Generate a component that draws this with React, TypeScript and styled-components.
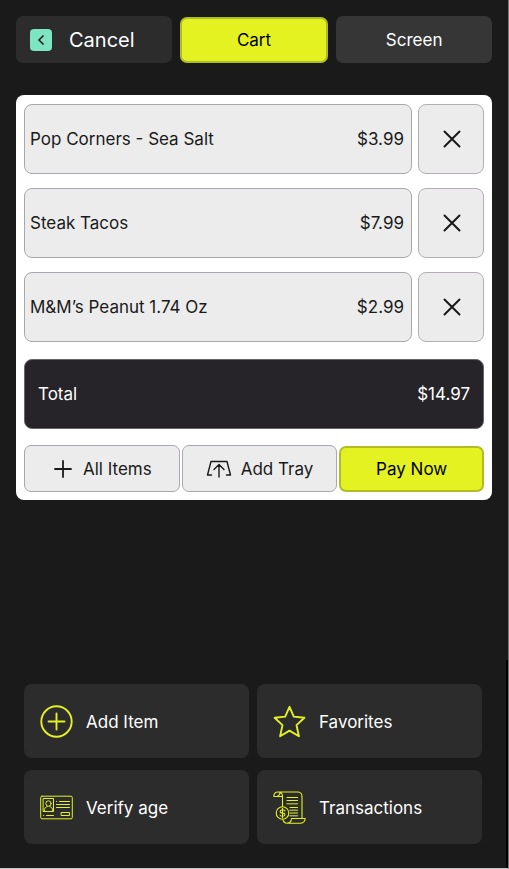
import React from "react";
import styled, { createGlobalStyle, css } from "styled-components";

const GlobalStyle = createGlobalStyle`
  *, *::before, *::after { box-sizing: border-box; }
  body {
    margin: 0;
    background: #1a1a1a;
    font-family: Inter, "Liberation Sans", sans-serif;
  }
  button { font: inherit; cursor: pointer; }
`;

const Page = styled.main`
  position: relative;
  display: flex;
  flex-direction: column;
  min-height: 100vh;
  padding: 16px 16px 24px;
  background: #1a1a1a;
  border-right: 1px solid #777777;
  border-bottom: 1px solid #c4c4c4;
  font-size: 17px;
  line-height: 24px;

  &::after {
    content: "";
    position: absolute;
    right: 0;
    bottom: 0;
    width: 2px;
    height: 24%;
    background: #000000;
  }
`;

const TopBar = styled.nav`
  display: grid;
  grid-template-columns: 156fr 149fr 156fr;
  align-items: center;
  gap: 8px;
  margin-bottom: 32px;
`;

const TopButton = styled.button<{ $active?: boolean; $shade?: string }>`
  display: flex;
  align-items: center;
  justify-content: center;
  height: 47px;
  padding: 1px 14px 0;
  border: 0;
  border-radius: 7px;
  background: ${(p) => p.$shade ?? "#2c2c2c"};
  color: #ffffff;
  ${(p) =>
    p.$active &&
    css`
      height: 46px;
      border: 2px solid #b2bd25;
      background: #e4f222;
      color: #000000;
    `}
`;

const CancelButton = styled(TopButton)`
  justify-content: flex-start;
  gap: 17px;
  font-size: 20px;
`;

const BackBadge = styled.span`
  display: grid;
  place-items: center;
  width: 22px;
  height: 22px;
  border-radius: 4px;
  background: #7de5c2;
`;

const CartCard = styled.section`
  padding: 9px 8px 8px;
  border-radius: 8px;
  background: #ffffff;
  color: #1a1a1a;
`;

const ItemList = styled.ul`
  display: flex;
  flex-direction: column;
  gap: 14px;
  margin: 0 0 17px;
  padding: 0;
  list-style: none;
`;

const ItemRow = styled.li`
  display: grid;
  grid-template-columns: 1fr 66px;
  gap: 6px;
`;

const ItemPanel = styled.div`
  display: flex;
  align-items: center;
  justify-content: space-between;
  height: 70px;
  padding: 0 7px 0 5px;
  border: 1px solid #aaa6ad;
  border-radius: 8px;
  background: #ececec;
`;

const RemoveButton = styled.button`
  display: grid;
  place-items: center;
  padding: 0 0 0 1px;
  border: 1px solid #b5aeb7;
  border-radius: 8px;
  background: #ececec;
  color: #1a1a1a;
`;

const TotalPanel = styled(ItemPanel)`
  margin-bottom: 16px;
  padding: 0 13px;
  border-color: #68656b;
  background: #262428;
  color: #ffffff;
`;

const CartActions = styled.div`
  display: grid;
  grid-template-columns: 156fr 156fr 145fr;
  align-items: center;
  gap: 2px;
`;

const ActionButton = styled.button<{ $primary?: boolean }>`
  display: flex;
  align-items: center;
  justify-content: center;
  gap: 9px;
  height: 47px;
  padding: 1px 0 0;
  border: 1px solid #aaa6ad;
  border-radius: 7px;
  background: #ececec;
  color: #1a1a1a;
  ${(p) =>
    p.$primary &&
    css`
      height: 46px;
      border: 2px solid #b2bd25;
      background: #e4f222;
      color: #000000;
    `}
`;

const TileGrid = styled.section`
  display: grid;
  grid-template-columns: 1fr 1fr;
  gap: 12px 8px;
  margin: auto 10px 0 8px;
  padding-top: 24px;
`;

const Tile = styled.button`
  display: flex;
  align-items: center;
  gap: 13px;
  height: 74px;
  padding: 1px 16px 0;
  border: 0;
  border-radius: 8px;
  background: #2c2c2c;
  color: #ffffff;

  svg { flex: none; }
`;

const accent = "#e4f222";

const ChevronLeft = () => (
  <svg width="14" height="14" viewBox="0 0 14 14" fill="none" stroke="#111" strokeWidth="1.5" aria-hidden="true">
    <path d="M9.5 2.5 5 7l4.5 4.5" />
  </svg>
);

const CrossIcon = () => (
  <svg width="20" height="20" viewBox="0 0 20 20" fill="none" stroke="currentColor" strokeWidth="2" strokeLinecap="round" aria-hidden="true">
    <path d="M2.5 2.5l15 15M17.5 2.5l-15 15" />
  </svg>
);

const PlusIcon = () => (
  <svg width="22" height="22" viewBox="0 0 22 22" fill="none" stroke="currentColor" strokeWidth="1.8" strokeLinecap="round" aria-hidden="true">
    <path d="M11 3v16M3 11h16" />
  </svg>
);

const TrayIcon = () => (
  <svg width="26" height="20" viewBox="0 0 26 20" fill="none" stroke="currentColor" strokeWidth="1.4" strokeLinecap="round" strokeLinejoin="round" aria-hidden="true">
    <path d="M5.5 16H1.5L5 2.5h16L24.5 16h-4M13 18V6M8 10.5l5-5 5 5" />
  </svg>
);

const AddCircleIcon = () => (
  <svg width="33" height="33" viewBox="0 0 33 33" fill="none" stroke={accent} strokeWidth="1.9" strokeLinecap="round" aria-hidden="true">
    <circle cx="16.5" cy="16.5" r="15.2" />
    <path d="M16.5 8.5v16M8.5 16.5h16" />
  </svg>
);

const StarIcon = () => (
  <svg width="33" height="33" viewBox="0 0 33 33" fill="none" stroke={accent} strokeWidth="1.9" strokeLinejoin="round" aria-hidden="true">
    <path d="M16.5 1.8 20.8 11.6 31.4 12.8 23.5 20.1 25.9 31.2 16.5 25.6 7.1 31.2 9.5 20.1 1.6 12.8 12.2 11.6Z" />
  </svg>
);

const IdCardIcon = () => (
  <svg width="33" height="33" viewBox="0 0 33 33" fill="none" stroke={accent} strokeWidth="1" strokeLinecap="round" strokeLinejoin="round" aria-hidden="true">
    <rect x=".7" y="5.2" width="31.6" height="22.6" rx="1.3" />
    <rect x="3.5" y="7.5" width="10" height="13" />
    <circle cx="8.5" cy="12.5" r="2.7" />
    <path d="M4.4 20v-1.7q.5-2.3 2.8-2.8M12.6 20v-1.7q-.5-2.3-2.8-2.8M19.5 10.5h10M16.5 10.5h.2M16.5 13.5h13M16.5 16.5h13M6.5 24.5h7M3.5 24.5h.2" />
    <rect x="21.5" y="21.5" width="8" height="3" />
  </svg>
);

const ReceiptIcon = () => (
  <svg width="33" height="33" viewBox="0 0 33 33" fill="none" stroke={accent} strokeWidth="1.1" strokeLinecap="round" strokeLinejoin="round" aria-hidden="true">
    <path d="M9.5 15.5V5.5H.8C.8 2.5 2.3 1 5 1h20q4 .2 4 4.5v21.7M5 1q4.5 0 4.5 4.5M4.5 5.3Q7 4.2 7 1.8M10 29q1 3.2 4.3 3.2h13.5q4-.5 4.4-4.7H18.5q-.3 4.2-4.2 4.7" />
    <circle cx="9.5" cy="22" r="6.3" />
    <path d="M12 20q-.5-1.3-2.5-1.3T7.2 20.3 9.5 22t2.4 1.7-2.4 1.6T7 24M9.5 17.3v9.4" />
    <path d="M14 6.5h10.5M14 9.5h10.5M17 16.5h7.5M17 22h7.5" />
    <path d="M14 12.8h10.5M17 19.3h7.5M17 24.8h7.5" opacity=".65" strokeWidth="1.5" />
  </svg>
);

const items = [
  { name: "Pop Corners - Sea Salt", price: "$3.99" },
  { name: "Steak Tacos", price: "$7.99" },
  { name: "M&M’s Peanut 1.74 Oz", price: "$2.99" },
];

const tiles = [
  { label: "Add Item", Icon: AddCircleIcon },
  { label: "Favorites", Icon: StarIcon },
  { label: "Verify age", Icon: IdCardIcon },
  { label: "Transactions", Icon: ReceiptIcon },
];

export default function App() {
  return (
    <>
      <GlobalStyle />
      <Page>
        <TopBar>
          <CancelButton type="button">
            <BackBadge><ChevronLeft /></BackBadge>
            Cancel
          </CancelButton>
          <TopButton type="button" $active>Cart</TopButton>
          <TopButton type="button" $shade="#363636">Screen</TopButton>
        </TopBar>

        <CartCard>
          <ItemList>
            {items.map((item) => (
              <ItemRow key={item.name}>
                <ItemPanel>
                  <span>{item.name}</span>
                  <span>{item.price}</span>
                </ItemPanel>
                <RemoveButton type="button" aria-label={`Remove ${item.name}`}>
                  <CrossIcon />
                </RemoveButton>
              </ItemRow>
            ))}
          </ItemList>
          <TotalPanel>
            <span>Total</span>
            <span>$14.97</span>
          </TotalPanel>
          <CartActions>
            <ActionButton type="button"><PlusIcon />All Items</ActionButton>
            <ActionButton type="button"><TrayIcon />Add Tray</ActionButton>
            <ActionButton type="button" $primary>Pay Now</ActionButton>
          </CartActions>
        </CartCard>

        <TileGrid>
          {tiles.map(({ label, Icon }) => (
            <Tile key={label} type="button">
              <Icon />
              {label}
            </Tile>
          ))}
        </TileGrid>
      </Page>
    </>
  );
}
